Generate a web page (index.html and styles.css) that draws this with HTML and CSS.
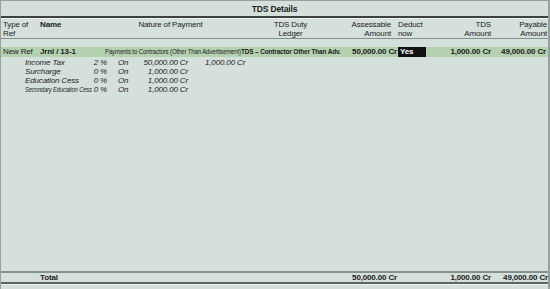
FILE: index.html
```html
<!DOCTYPE html>
<html lang="en">
<head>
    <meta charset="UTF-8">
    <title>TDS Details</title>
    <link rel="stylesheet" href="styles.css">
</head>
<body>
    <div class="screen">
        <div class="title">TDS Details</div>

        <div class="row head">
            <div class="c-type">Type of<br>Ref</div>
            <div class="c-name b">Name</div>
            <div class="c-nature center">Nature of Payment</div>
            <div class="c-ledger center">TDS Duty<br>Ledger</div>
            <div class="c-assess right">Assessable<br>Amount</div>
            <div class="c-deduct">Deduct<br>now</div>
            <div class="c-tds right">TDS<br>Amount</div>
            <div class="c-pay right">Payable<br>Amount</div>
        </div>

        <div class="row entry">
            <div class="c-type">New Ref</div>
            <div class="c-name b">Jrnl / 13-1</div>
            <div class="c-nature"><span class="squeeze">Payments to Contractors (Other Than Advertisement)</span></div>
            <div class="c-ledger b"><span class="squeeze bold">TDS &ndash; Contractor Other Than Adv.</span></div>
            <div class="c-assess right b">50,000.00 Cr</div>
            <div class="c-deduct"><span class="yes">Yes</span></div>
            <div class="c-tds right b">1,000.00 Cr</div>
            <div class="c-pay right b">49,000.00 Cr</div>
        </div>

        <div class="detail first">
            <div class="d-name">Income Tax</div>
            <div class="d-rate">2 %</div>
            <div class="d-on">On</div>
            <div class="d-amt">50,000.00 Cr</div>
            <div class="d-tax">1,000.00 Cr</div>
        </div>
        <div class="detail">
            <div class="d-name">Surcharge</div>
            <div class="d-rate">0 %</div>
            <div class="d-on">On</div>
            <div class="d-amt">1,000.00 Cr</div>
        </div>
        <div class="detail">
            <div class="d-name">Education Cess</div>
            <div class="d-rate">0 %</div>
            <div class="d-on">On</div>
            <div class="d-amt">1,000.00 Cr</div>
        </div>
        <div class="detail">
            <div class="d-name"><span class="squeeze cess">Secondary Education Cess</span></div>
            <div class="d-rate">0 %</div>
            <div class="d-on">On</div>
            <div class="d-amt">1,000.00 Cr</div>
        </div>

        <div class="filler"></div>

        <div class="row total">
            <div class="c-type"></div>
            <div class="c-name b">Total</div>
            <div class="c-nature"></div>
            <div class="c-ledger"></div>
            <div class="c-assess right b">50,000.00 Cr</div>
            <div class="c-deduct"></div>
            <div class="c-tds right b">1,000.00 Cr</div>
            <div class="c-pay right b">49,000.00 Cr</div>
        </div>
        <div class="bottom"></div>
    </div>
</body>
</html>
```

FILE: styles.css
```css
html, body {
    margin: 0;
    height: 100%;
}
body {
    background-color: #d5e0dc;
    color: #1c1c1c;
    font-family: "Liberation Sans", Arial, sans-serif;
    font-size: 8px;
    letter-spacing: -0.15px;
}
.screen {
    height: 289px;
    width: 550px;
    box-sizing: border-box;
    border-top: 1px solid #96a09d;
    border-left: 1px solid #96a09d;
    border-right: 2px solid #96a09d;
    display: flex;
    flex-direction: column;
}
.title {
    height: 15px;
    line-height: 16px;
    text-align: center;
    font-weight: bold;
    font-size: 8.5px;
    border-bottom: 2px solid #3d4240;
}
.row {
    display: grid;
    grid-template-columns: 37px 62px 137px 103px 56px 32px 61px 57px;
    padding-left: 2px;
}
.row > div {
    white-space: nowrap;
}
.head {
    padding-top: 1px;
    height: 18px;
    line-height: 9px;
    border-top: 1px solid #eef3f1;
    border-bottom: 1px solid #86908d;
}
.head .c-assess {
    padding-right: 7px;
}
.head .c-pay {
    padding-right: 1px;
}
.entry {
    margin-top: 8px;
    height: 10px;
    line-height: 10px;
    background-color: #b5d2b0;
}
.entry .c-nature {
    padding-left: 3px;
}
.entry .c-ledger {
    padding-left: 2px;
}
.entry .c-assess,
.total .c-assess {
    padding-right: 1px;
}
.entry .c-pay {
    padding-right: 2px;
}
.b {
    font-weight: bold;
}
.center {
    text-align: center;
}
.right {
    text-align: right;
}
.squeeze {
    display: inline-block;
    transform: scaleX(0.75);
    transform-origin: left center;
}
.squeeze.bold {
    transform: scaleX(0.8);
}
.squeeze.cess {
    transform: scaleX(0.72);
}
.yes {
    display: inline-block;
    width: 28px;
    height: 10px;
    background-color: #111;
    color: #fff;
    font-weight: bold;
    padding-left: 2px;
    box-sizing: border-box;
}
.detail {
    display: flex;
    height: 9px;
    line-height: 9px;
    font-style: italic;
}
.detail.first {
    margin-top: 1px;
}
.detail > div {
    white-space: nowrap;
}
.d-name {
    width: 80px;
    padding-left: 24px;
    box-sizing: border-box;
}
.d-rate {
    width: 26px;
    text-align: right;
}
.d-on {
    width: 34px;
    padding-left: 11px;
    box-sizing: border-box;
}
.d-amt {
    width: 47px;
    text-align: right;
}
.d-tax {
    padding-left: 17px;
}
.filler {
    flex: 1;
}
.total {
    height: 9px;
    line-height: 10px;
    border-top: 2px solid #86908d;
    border-bottom: 2px solid #5c6361;
}
.bottom {
    height: 4px;
    border-top: 1px solid #eef3f1;
}
```
